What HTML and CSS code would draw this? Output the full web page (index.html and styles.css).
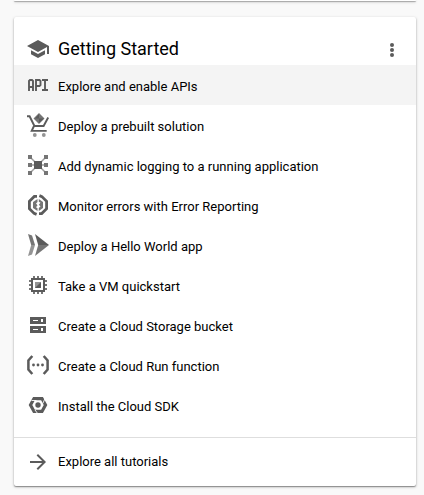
FILE: index.html
```html
<!DOCTYPE html>
<html lang="en">
<head>
<meta charset="utf-8">
<title>Getting Started</title>
<link rel="stylesheet" href="styles.css">
</head>
<body>
<div class="card card-previous"></div>
<section class="card">
  <header class="card-header">
    <svg class="icon" viewBox="0 0 24 24"><path d="M5 13.180v4L12 21l7-3.820v-4L12 17l-7-3.820zM12 3L1 9l11 6 9-4.910V17h2V9L12 3z"/></svg>
    <h2 class="title">Getting Started</h2>
    <svg class="more" viewBox="0 0 24 24"><circle cx="12" cy="6" r="2.400"/><circle cx="12" cy="12" r="2.400"/><circle cx="12" cy="18" r="2.400"/></svg>
  </header>
  <ul class="list">
    <li class="row row-active">
      <svg class="icon" viewBox="0 0 24 24"><g class="line" stroke-width="1.900"><path d="M3 18V8l1-1h2l1 1v10M3 14h4M10 18V7h3.500l1 1v4l-1 1H10M16 7h6M16 17h6M19 7v10"/></g></svg>
      <span>Explore and enable APIs</span>
    </li>
    <li class="row">
      <svg class="icon" viewBox="0 0 24 24"><g class="line" stroke-width="1.900"><path d="M1 3.300h2.600L8.400 13h9.200l4.600-8.500"/><path d="M8 13l-2.300 4.900h15"/></g><path class="mid" d="M13 0l5.500 5.500L13 11 7.500 5.500z"/><path d="M13 1v4.500h5L13 10V5.500H9z"/><circle class="light" cx="8.800" cy="22" r="1.900"/><circle class="light" cx="17.800" cy="22" r="1.900"/></svg>
      <span>Deploy a prebuilt solution</span>
    </li>
    <li class="row">
      <svg class="icon" viewBox="0 0 24 24"><path fill="none" stroke="#9e9e9e" stroke-width="1.500" d="M4 4l16 16M20 4L4 20M4 12h16"/><path class="mid" d="M2 2h4v4H2zM18 2h4v4h-4zM2 10h4v4H2zM18 10h4v4h-4zM2 18h4v4H2zM18 18h4v4h-4z"/><path d="M8 8h8v8H8z"/></svg>
      <span>Add dynamic logging to a running application</span>
    </li>
    <li class="row">
      <svg class="icon" viewBox="0 0 24 24"><g class="line" stroke-width="2.800"><path d="M11 3.400H8.300L3.400 8.300v7.400l4.700 4.700 2.500 1"/><path d="M13 20.600h2.700l4.900-4.900V8.300l-4.700-4.700-2.500-1"/></g><path class="mid" d="M11.500 6v3L10 10.500l1.500 1.700-1.500 2 1.500 1V18L7 15V9z"/><path class="mid" d="M12.800 6L17 9v6l-4.200 3v-3l1.700-1.500-1.700-1.700 1.700-2-1.700-1z"/></svg>
      <span>Monitor errors with Error Reporting</span>
    </li>
    <li class="row">
      <svg class="icon" viewBox="0 0 24 24"><path class="mid" d="M2 1l4 1.500L9 12H5.200z"/><path class="light" d="M5.200 12H9L6 21.500 2 23z"/><path d="M9 1l14 11H12.200z"/><path class="mid" d="M12.200 12H23L9 23z"/></svg>
      <span>Deploy a Hello World app</span>
    </li>
    <li class="row">
      <svg class="icon" viewBox="0 0 24 24"><path class="mid" d="M7 3h2v3H7zM11 3h2v3h-2zM15 3h2v3h-2zM7 18h2v3H7zM11 18h2v3h-2zM15 18h2v3h-2zM3 7h3v2H3zM3 11h3v2H3zM3 15h3v2H3zM18 7h3v2h-3zM18 11h3v2h-3zM18 15h3v2h-3z"/><path class="line" stroke-width="2" d="M6 6h12v12H6z"/><path class="light" d="M9 9h6v6H9z"/><path d="M15 9v6H9z"/></svg>
      <span>Take a VM quickstart</span>
    </li>
    <li class="row">
      <svg class="icon" viewBox="0 0 24 24"><path d="M4 4h16v7H4zM4 13h16v7H4z"/><path fill="#fff" d="M7 7h5v1H7zM15 6h2v3h-2zM7 16h5v1H7zM15 15h2v3h-2z"/></svg>
      <span>Create a Cloud Storage bucket</span>
    </li>
    <li class="row">
      <svg class="icon" viewBox="0 0 24 24"><g class="line" stroke-width="2.500"><path d="M6.300 3L2.400 7.500v9l3.900 4.500"/><path d="M17.700 3l3.900 4.500v9L17.700 21"/></g><circle cx="7.500" cy="12" r="1.400"/><circle cx="12" cy="12" r="1.400"/><circle cx="16.500" cy="12" r="1.400"/></svg>
      <span>Create a Cloud Run function</span>
    </li>
    <li class="row">
      <svg class="icon" viewBox="0 0 24 24"><path class="line" stroke-width="3.200" d="M8 5.600h8l3.500 6.400-3.500 6.400H8L4.500 12z"/><path fill="none" stroke="#fff" stroke-width=".9" d="M5.500 7.500h5M19 5.500l-2.200 5M12 21l-3-4"/><circle cx="12" cy="12" r="2.700"/></svg>
      <span>Install the Cloud SDK</span>
    </li>
  </ul>
  <footer class="row card-footer">
    <svg class="icon" viewBox="0 0 24 24"><path d="M12 4l-1.410 1.410L16.170 11H4v2h12.170l-5.580 5.590L12 20l8-8z"/></svg>
    <span>Explore all tutorials</span>
  </footer>
</section>
</body>
</html>
```
FILE: styles.css
```css
* { box-sizing: border-box; }

body {
  margin: 0;
  height: 495px;
  overflow: hidden;
  background: #f9f9f9;
  color: #000;
  font: 13px/20px Roboto, sans-serif;
}

.card {
  width: 402px;
  margin: 0 0 0 14px;
  background: #fff;
  border-radius: 2px;
  box-shadow: 0 1px 3px rgba(0, 0, 0, .28), 0 1px 1px rgba(0, 0, 0, .3);
}

.card-previous {
  height: 1px;
  margin-bottom: 16px;
  border-radius: 0 0 2px 2px;
}

.card-header {
  display: flex;
  align-items: center;
  height: 48px;
  padding: 16px 14px 0 12px;
}

.icon {
  flex: none;
  width: 24px;
  height: 24px;
  margin-right: 8px;
  fill: #5b5b5b;
}

.icon .line {
  fill: none;
  stroke: #5b5b5b;
}

.icon .mid { fill: #757575; }

.icon .light { fill: #949494; }

.title {
  flex: 1;
  margin: 0;
  font-size: 18px;
  font-weight: 400;
  line-height: 24px;
}

.more {
  width: 20px;
  height: 20px;
  margin-top: 2px;
  fill: #5b5b5b;
}

.list {
  margin: 0;
  padding: 0;
  list-style: none;
}

.row {
  display: flex;
  align-items: center;
  height: 40px;
  padding: 0 12px;
}

.row span { padding-top: 3px; }

.row-active { background: #f4f4f4; }

.card-footer {
  height: 49px;
  margin-top: 12px;
  border-top: 1px solid #dedede;
}

.card-footer span { padding-top: 0; }
```
